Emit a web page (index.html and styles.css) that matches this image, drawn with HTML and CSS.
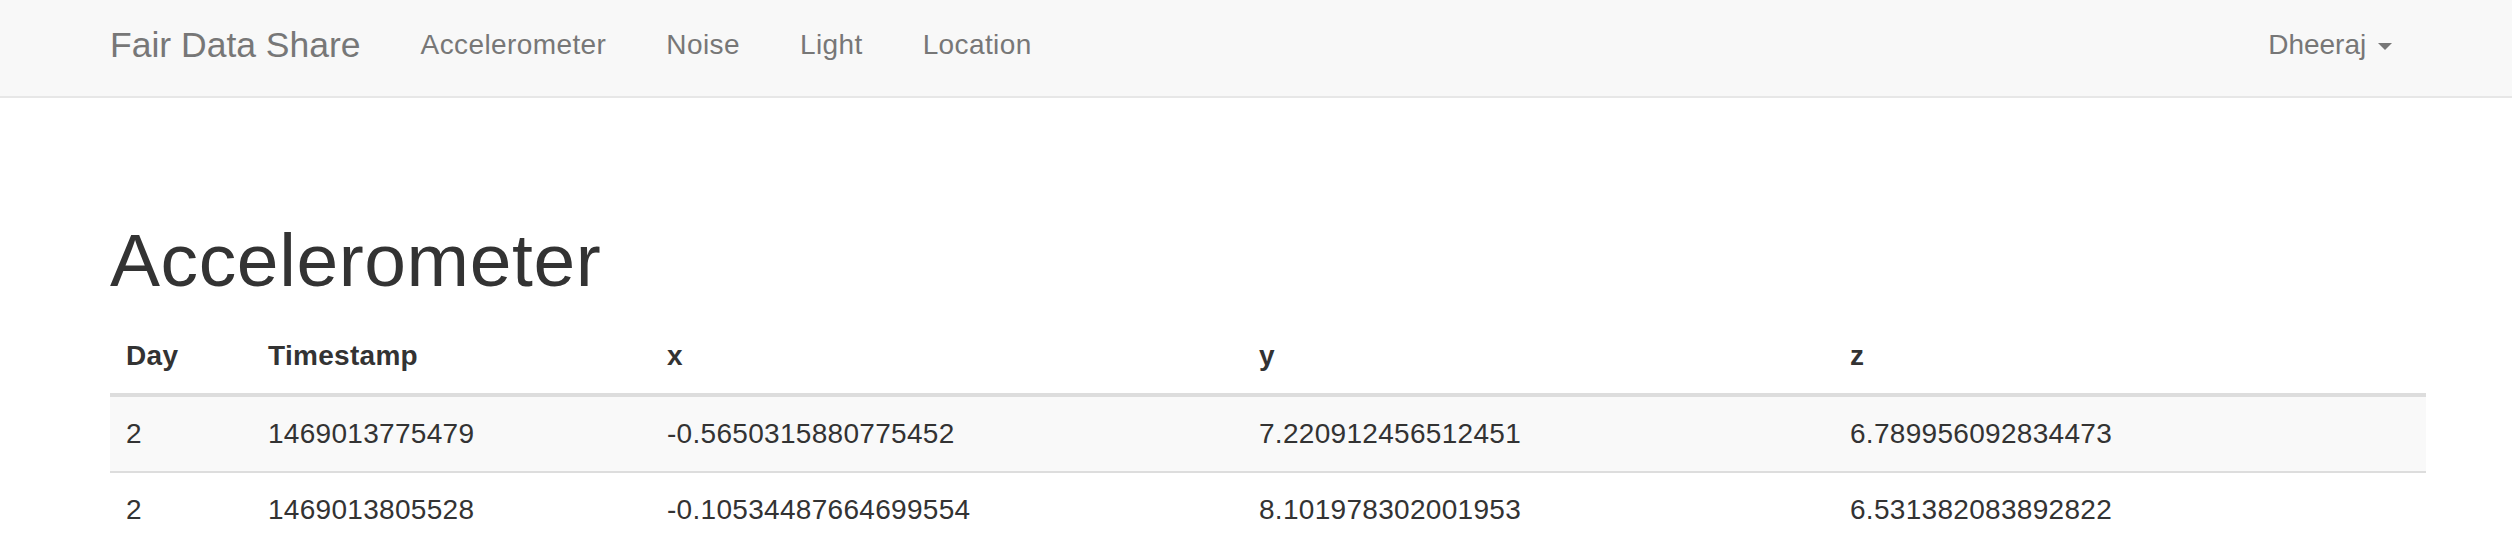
FILE: index.html
```html
<!DOCTYPE html>
<html lang="en">
<head>
<meta charset="utf-8">
<title>Fair Data Share</title>
<link rel="stylesheet" href="styles.css">
</head>
<body>
<nav class="navbar">
  <div class="container nav-inner">
    <a class="brand" href="#">Fair Data Share</a>
    <ul class="nav-links">
      <li><a href="#">Accelerometer</a></li>
      <li><a href="#">Noise</a></li>
      <li><a href="#">Light</a></li>
      <li><a href="#">Location</a></li>
    </ul>
    <a class="user" href="#">Dheeraj <span class="caret"></span></a>
  </div>
</nav>
<main class="container">
  <h1 class="title">Accelerometer</h1>
  <table class="data-table">
    <colgroup>
      <col class="c-day">
      <col class="c-ts">
      <col class="c-x">
      <col class="c-y">
      <col class="c-z">
    </colgroup>
    <thead>
      <tr><th>Day</th><th>Timestamp</th><th>x</th><th>y</th><th>z</th></tr>
    </thead>
    <tbody>
      <tr><td>2</td><td>1469013775479</td><td>-0.5650315880775452</td><td>7.220912456512451</td><td>6.789956092834473</td></tr>
      <tr><td>2</td><td>1469013805528</td><td>-0.10534487664699554</td><td>8.101978302001953</td><td>6.531382083892822</td></tr>
    </tbody>
  </table>
</main>
</body>
</html>
```
FILE: styles.css
```css
html, body {
  margin: 0;
  padding: 0;
  background: #fff;
  font-family: "Liberation Sans", Arial, Helvetica, sans-serif;
  color: #333;
}

.container {
  width: 2316px;
  margin-left: 110px;
}

a { text-decoration: none; }

.navbar {
  height: 96px;
  background: #f8f8f8;
  border-bottom: 2px solid #e7e7e7;
}

.nav-inner {
  display: flex;
  align-items: flex-start;
  height: 96px;
}

.brand {
  display: block;
  padding: 25px 30px 0 0;
  font-size: 35.5px;
  line-height: 40px;
  color: #777;
}

.nav-links {
  display: flex;
  list-style: none;
  margin: 0;
  padding: 0;
}

.nav-links a,
.user {
  display: block;
  padding: 25px 30px 0 30px;
  font-size: 28px;
  line-height: 40px;
  color: #777;
}

.nav-links a {
  letter-spacing: 0.4px;
}

.user {
  margin-left: auto;
  padding-right: 34px;
}

.caret {
  display: inline-block;
  width: 0;
  height: 0;
  margin-left: 4px;
  vertical-align: middle;
  border-top: 7px solid #777;
  border-left: 7px solid transparent;
  border-right: 7px solid transparent;
}

.title {
  margin: 121px 0 17px 0;
  font-size: 75px;
  line-height: 1.1;
  font-weight: 500;
  letter-spacing: 0.6px;
  color: #333;
}

.data-table {
  width: 2316px;
  table-layout: fixed;
  border-collapse: collapse;
  border-spacing: 0;
  font-size: 28px;
  line-height: 42px;
  letter-spacing: 0.3px;
  color: #333;
}

.c-day { width: 142px; }
.c-ts { width: 399px; }
.c-x { width: 592px; }
.c-y { width: 591px; }
.c-z { width: 592px; }

.data-table th,
.data-table td {
  padding: 16px;
  text-align: left;
  vertical-align: top;
  white-space: nowrap;
}

.data-table th {
  font-weight: bold;
  border-bottom: 4px solid #ddd;
}

.data-table td {
  border-top: 2px solid #ddd;
}

.data-table tbody tr:nth-child(odd) {
  background: #f9f9f9;
}

.data-table tbody tr:last-child td {
  border-bottom: 2px solid #ddd;
}
```
